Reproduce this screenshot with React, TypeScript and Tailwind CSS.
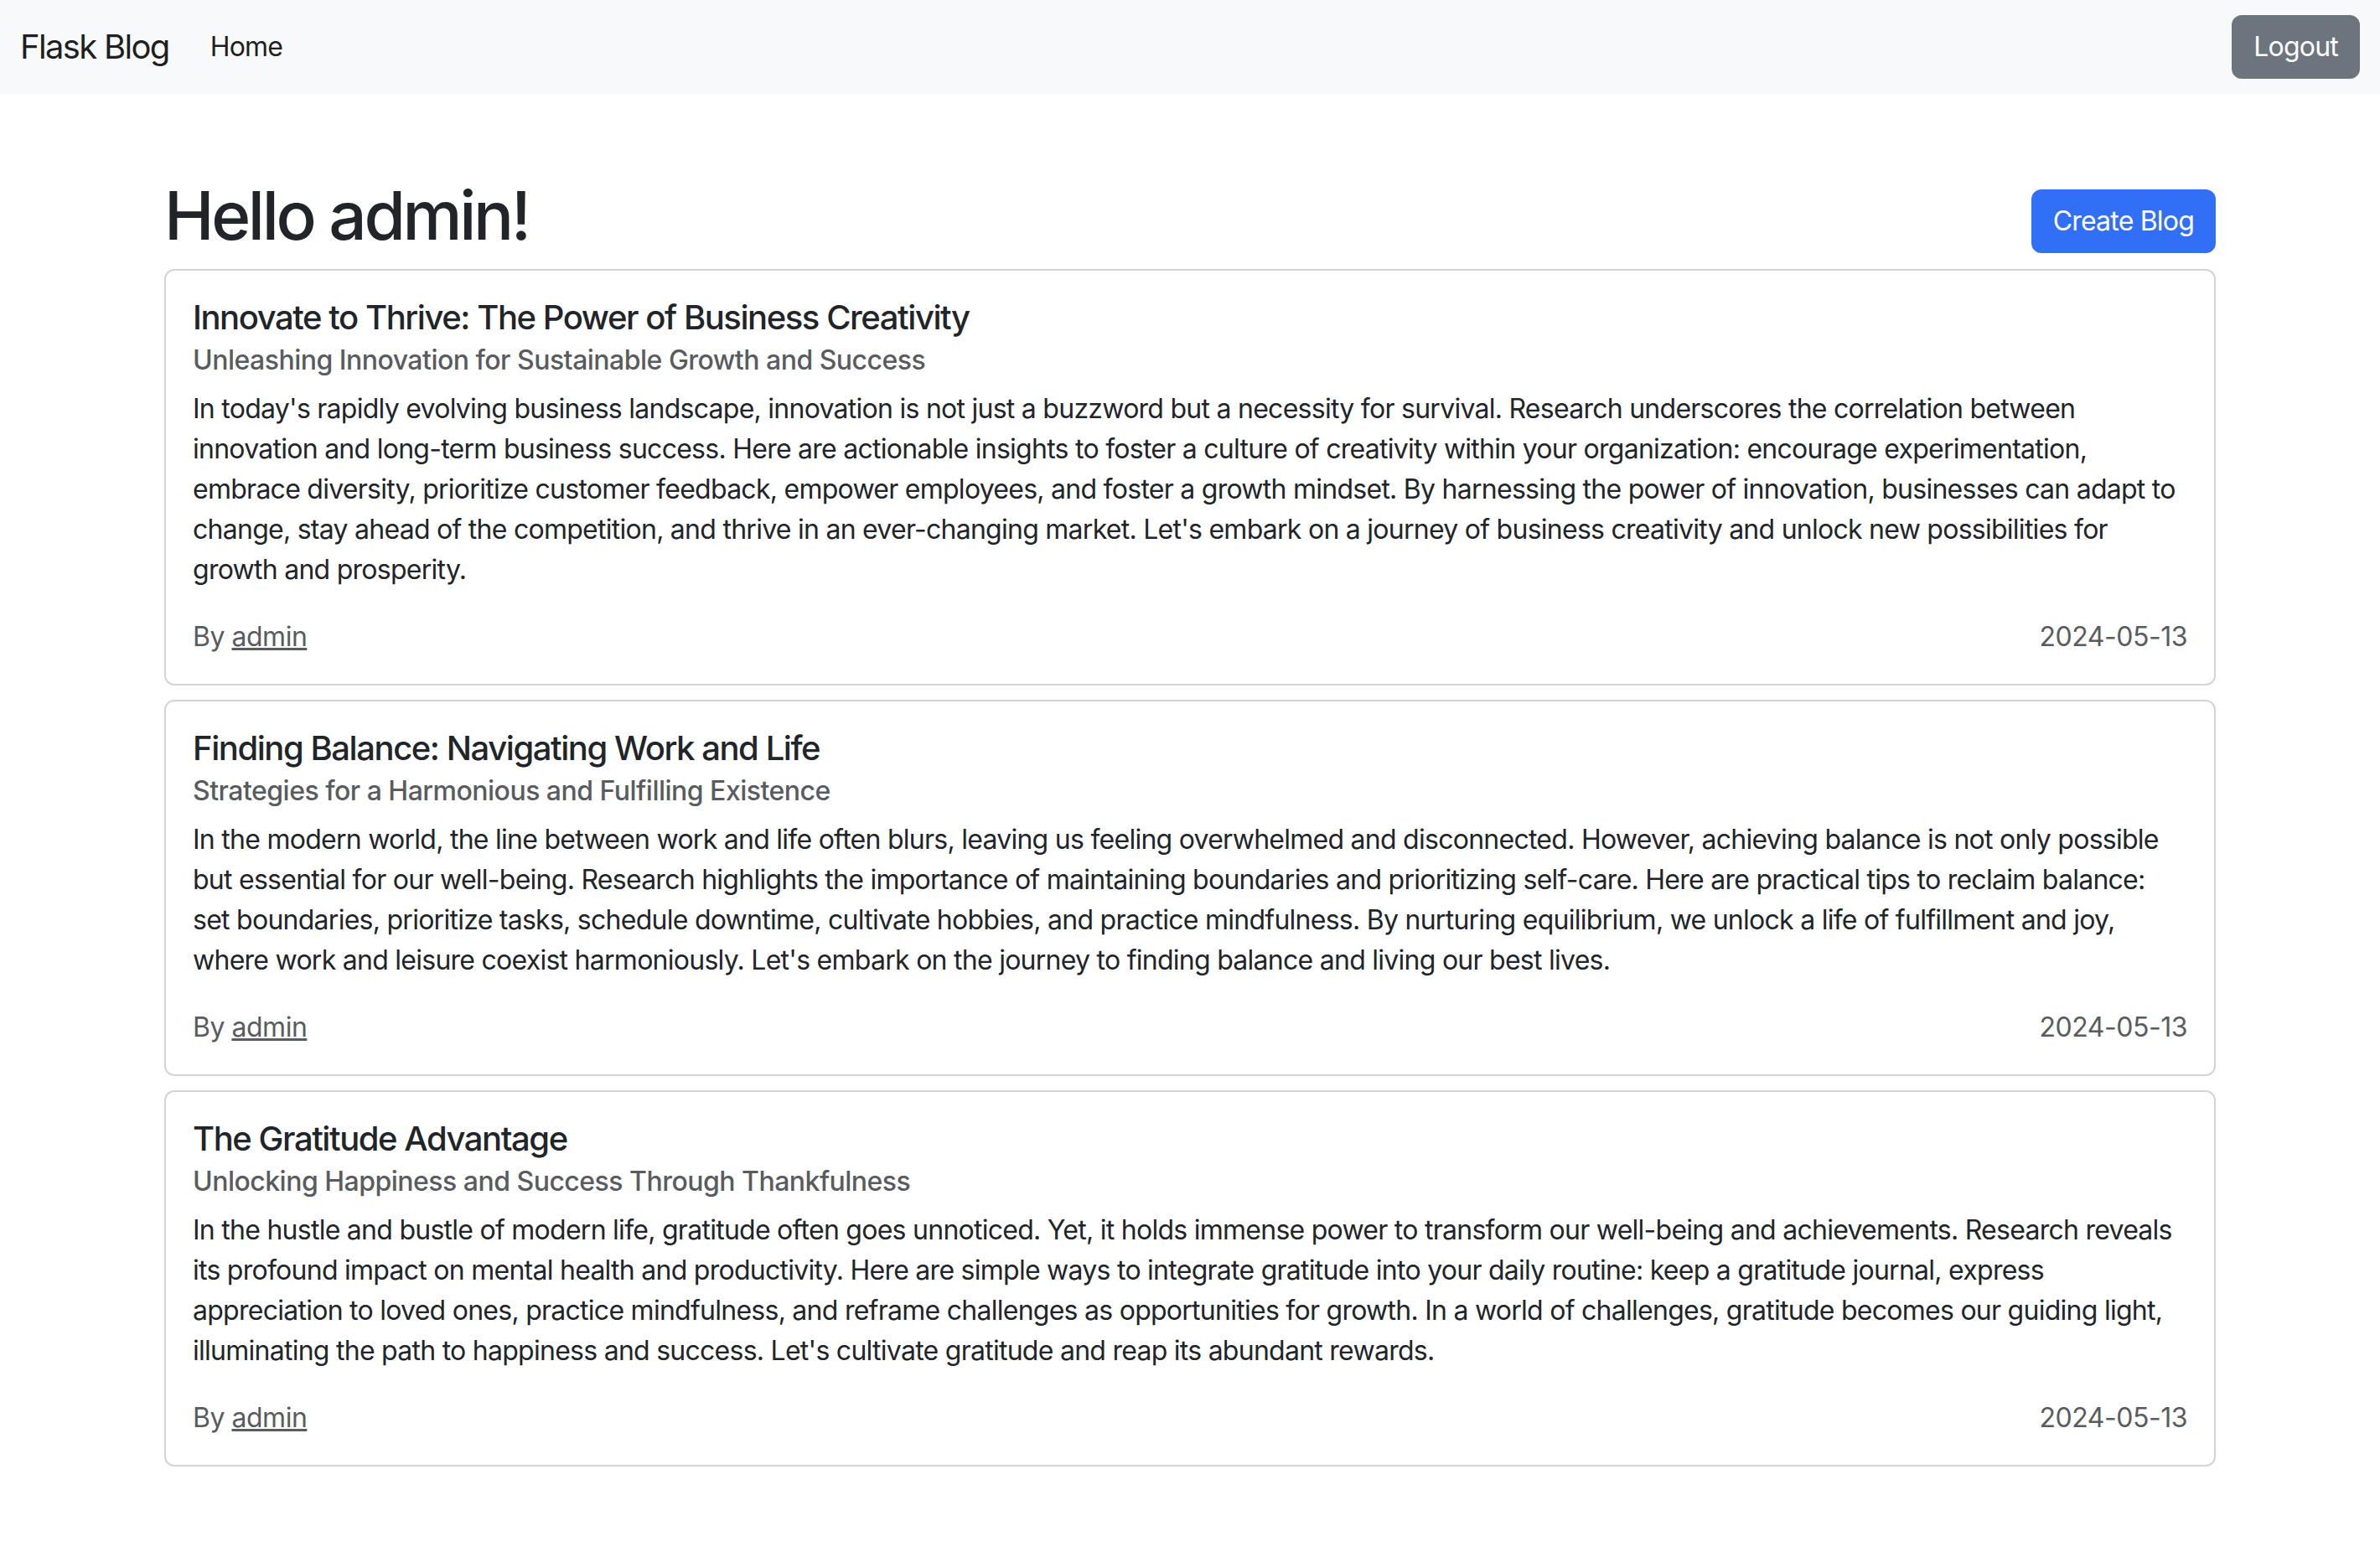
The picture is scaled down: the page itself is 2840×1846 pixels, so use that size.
import React from "react";

interface Post {
  title: string;
  subtitle: string;
  // body kept as the rendered lines so wrapping matches
  lines: string[];
  author: string;
  date: string;
}

const posts: Post[] = [
  {
    title: "Innovate to Thrive: The Power of Business Creativity",
    subtitle: "Unleashing Innovation for Sustainable Growth and Success",
    lines: [
      "In today's rapidly evolving business landscape, innovation is not just a buzzword but a necessity for survival. Research underscores the correlation between",
      "innovation and long-term business success. Here are actionable insights to foster a culture of creativity within your organization: encourage experimentation,",
      "embrace diversity, prioritize customer feedback, empower employees, and foster a growth mindset. By harnessing the power of innovation, businesses can adapt to",
      "change, stay ahead of the competition, and thrive in an ever-changing market. Let's embark on a journey of business creativity and unlock new possibilities for",
      "growth and prosperity.",
    ],
    author: "admin",
    date: "2024-05-13",
  },
  {
    title: "Finding Balance: Navigating Work and Life",
    subtitle: "Strategies for a Harmonious and Fulfilling Existence",
    lines: [
      "In the modern world, the line between work and life often blurs, leaving us feeling overwhelmed and disconnected. However, achieving balance is not only possible",
      "but essential for our well-being. Research highlights the importance of maintaining boundaries and prioritizing self-care. Here are practical tips to reclaim balance:",
      "set boundaries, prioritize tasks, schedule downtime, cultivate hobbies, and practice mindfulness. By nurturing equilibrium, we unlock a life of fulfillment and joy,",
      "where work and leisure coexist harmoniously. Let's embark on the journey to finding balance and living our best lives.",
    ],
    author: "admin",
    date: "2024-05-13",
  },
  {
    title: "The Gratitude Advantage",
    subtitle: "Unlocking Happiness and Success Through Thankfulness",
    lines: [
      "In the hustle and bustle of modern life, gratitude often goes unnoticed. Yet, it holds immense power to transform our well-being and achievements. Research reveals",
      "its profound impact on mental health and productivity. Here are simple ways to integrate gratitude into your daily routine: keep a gratitude journal, express",
      "appreciation to loved ones, practice mindfulness, and reframe challenges as opportunities for growth. In a world of challenges, gratitude becomes our guiding light,",
      "illuminating the path to happiness and success. Let's cultivate gratitude and reap its abundant rewards.",
    ],
    author: "admin",
    date: "2024-05-13",
  },
];

function PostCard({ post }: { post: Post }) {
  return (
    <div className="border-2 border-[#d4d4d4] rounded-[12px] p-8 bg-white">
      <h5 className="text-[40px] leading-[48px] font-medium tracking-[-0.036em] text-[#212529]">{post.title}</h5>
      <h6 className="mt-2 text-[32px] leading-[38px] font-medium tracking-[-0.016em] text-[#595c5f]">{post.subtitle}</h6>
      <p className="mt-[15px] text-[32px] leading-[48px] tracking-[-0.023em] text-[#212529]">
        {post.lines.map((l, i) => (
          <span key={i} className="block whitespace-nowrap">{l}</span>
        ))}
      </p>
      <div className="mt-8 flex justify-between text-[32px] leading-[48px] tracking-[-0.015em] text-[#595c5f]">
        <span>
          By <a href="#" className="underline text-[#595c5f]">{post.author}</a>
        </span>
        <span>{post.date}</span>
      </div>
    </div>
  );
}

export default function App() {
  return (
    <div className="min-h-screen bg-white font-['Inter','Liberation_Sans',sans-serif]">
      {/* Navbar */}
      <nav className="h-[112px] bg-[#f8f9fa] flex items-center justify-between px-6">
        <div className="flex items-center">
          <a href="#" className="text-[40px] leading-[60px] tracking-[-0.042em] text-black/90">Flask Blog</a>
          <a href="#" className="ml-[49px] text-[32px] leading-[48px] tracking-[-0.025em] text-black/90">Home</a>
        </div>
        <button className="bg-[#6c757d] border-2 border-[#6c757d] text-white text-[32px] leading-[48px] tracking-[-0.025em] px-6 py-3 rounded-[12px]">
          Logout
        </button>
      </nav>

      {/* Main */}
      <main className="w-[2448px] mx-auto mt-[97px] pb-24">
        <div className="flex justify-between items-start mb-4">
          <h1 className="text-[80px] leading-[96px] font-medium tracking-[-0.042em] text-[#212529]">Hello admin!</h1>
          <button className="mt-[17px] bg-[#316ff6] border-2 border-[#316ff6] text-white text-[32px] leading-[48px] tracking-[-0.025em] px-6 py-3 rounded-[12px]">
            Create Blog
          </button>
        </div>
        <div className="flex flex-col gap-[17px]">
          {posts.map((p, i) => (
            <PostCard key={i} post={p} />
          ))}
        </div>
      </main>
    </div>
  );
}
